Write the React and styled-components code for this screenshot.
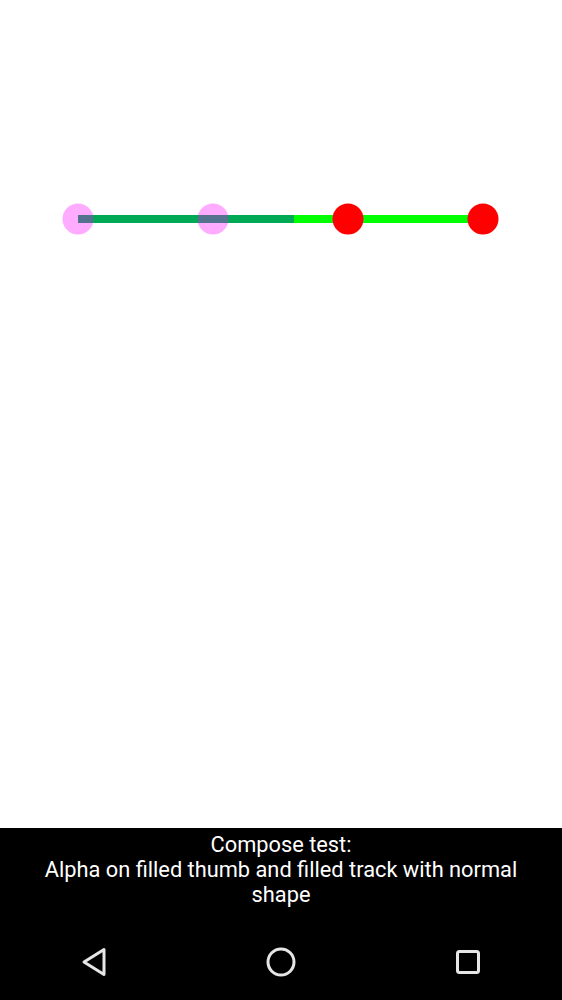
import React from "react";
import styled, { createGlobalStyle } from "styled-components";

const GlobalStyle = createGlobalStyle`
  html, body {
    margin: 0;
    padding: 0;
    background: #ffffff;
  }
  body {
    font-family: Roboto, "Noto Sans", sans-serif;
  }
`;

const Screen = styled.div`
  width: 562px;
  height: 1000px;
  display: flex;
  flex-direction: column;
  overflow: hidden;
`;

const Content = styled.main`
  flex: 1;
  background: #ffffff;
  padding: 215px 79px 0 78px;
`;

const Track = styled.div`
  position: relative;
  height: 8px;
  display: flex;
`;

const TrackPart = styled.div`
  height: 100%;
  width: ${({ $w }) => $w};
  flex: ${({ $grow }) => ($grow ? 1 : "none")};
  background: ${({ $color }) => $color};
`;

const Thumb = styled.div`
  position: absolute;
  top: 50%;
  width: 31px;
  height: 31px;
  border-radius: 50%;
  transform: translate(-50%, -50%);
  background: ${({ $color }) => $color};
`;

const Bottom = styled.footer`
  background: #000000;
  display: flex;
  flex-direction: column;
`;

const Caption = styled.div`
  color: #ffffff;
  font-size: 21.8px;
  line-height: 25px;
  text-align: center;
  padding: 4px 30px 0;
  height: 94px;
  box-sizing: border-box;
`;

const NavBar = styled.nav`
  height: 78px;
  display: flex;
  align-items: center;
  justify-content: space-between;
  padding: 2px 76px 0 76px;
  box-sizing: border-box;
`;

const NavButton = styled.div`
  width: 36px;
  height: 36px;
  display: flex;
  align-items: center;
  justify-content: center;
`;

const thumbs = [
  { pos: 0, color: "rgba(255, 0, 255, 0.33)" },
  { pos: 1 / 3, color: "rgba(255, 0, 255, 0.33)" },
  { pos: 2 / 3, color: "#ff0000" },
  { pos: 1, color: "#ff0000" },
];

export default function App() {
  return (
    <Screen>
      <GlobalStyle />
      <Content>
        <Track>
          <TrackPart $w="216px" $color="#00aa55" />
          <TrackPart $grow $color="#00ff00" />
          {thumbs.map((t, i) => (
            <Thumb key={i} $color={t.color} style={{ left: `${t.pos * 100}%` }} />
          ))}
        </Track>
      </Content>
      <Bottom>
        <Caption>
          Compose test:
          <br />
          Alpha on filled thumb and filled track with normal shape
        </Caption>
        <NavBar>
          <NavButton>
            <svg width="28" height="32" viewBox="0 0 28 32">
              <path
                d="M24 3.5 L4 16 L24 28.5 Z"
                fill="none"
                stroke="#e6e6e6"
                strokeWidth="3"
                strokeLinejoin="round"
              />
            </svg>
          </NavButton>
          <NavButton>
            <svg width="32" height="32" viewBox="0 0 32 32">
              <circle cx="16" cy="16" r="13" fill="none" stroke="#e6e6e6" strokeWidth="3" />
            </svg>
          </NavButton>
          <NavButton>
            <svg width="28" height="28" viewBox="0 0 28 28">
              <rect
                x="3.5"
                y="3.5"
                width="21"
                height="21"
                rx="2"
                fill="none"
                stroke="#e6e6e6"
                strokeWidth="3"
              />
            </svg>
          </NavButton>
        </NavBar>
      </Bottom>
    </Screen>
  );
}
